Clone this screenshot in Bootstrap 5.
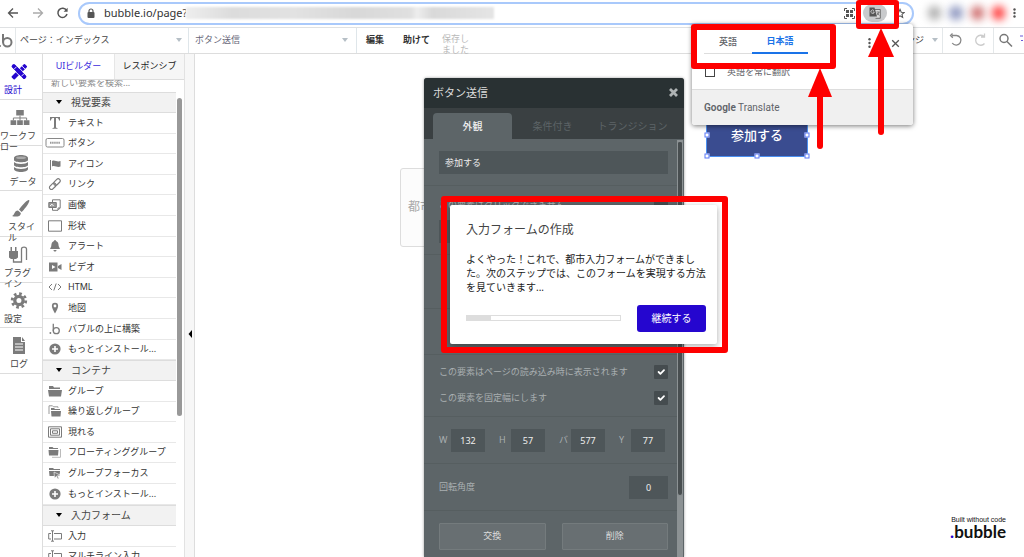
<!DOCTYPE html>
<html lang="ja">
<head>
<meta charset="utf-8">
<meta name="viewport" content="width=device-width, initial-scale=1">
<title>Bubble エディタ</title>
<link href="https://cdn.jsdelivr.net/npm/bootstrap@5.3.0/dist/css/bootstrap.min.css" rel="stylesheet">
<style>
:root{--ui:"Noto Sans","Noto Sans CJK JP",sans-serif;--blue:#2506cf;--ink:#444;--red:#fe0000}
body{font-family:var(--ui);font-size:9px;line-height:12px;color:var(--ink);background:#fff}
button,input{font-family:var(--ui)}
a{color:inherit;text-decoration:none}
svg{display:block;flex:none}
.bare{background:none;border:0;padding:0;color:inherit;font-size:inherit;line-height:inherit}
/* browser bar */
.browser{height:28px;padding:0 8px 0 6px;border-bottom:1px solid #dfe1e3;color:#5f6368;position:relative}
.omnibox{height:23px;border:2px solid #a9c9fb;border-radius:12px;padding:0 7px 0 6px;background:#fff}
.url{width:82px;border:0;padding:0;font-size:11px;line-height:16px;color:#333;background:none;outline:0}
.redacted{width:308px;height:12px;background:linear-gradient(90deg,#eee,#dcdcdc 15%,#e2e2e2 35%,#d8d8d8 55%,#e0e0e0 73%,#eee 75%,#d9d9d9 80%,#e5e5e5);filter:blur(1px)}
.extensions{width:102px;padding-left:14px}
.extensions i{width:14px;height:14px;border-radius:50%;filter:blur(4px)}
.pilled{width:24px;height:18px;border-radius:9px;background:#c8cacc}
/* editor header */
.appbar{height:26px;border-bottom:1px solid #ddd}
.appbar>*{height:25px}
.logo{width:16px;border-right:1px solid #e4e8ea}
.pick{border-right:1px solid #dfe6ea}
.pick-page{width:173px;padding:0 6px 0 4px}
.pick-element{width:168px;padding:0 8px 0 6px;color:#667}
.menus{gap:19px;padding-left:9px;color:#333}
.menus button{font-weight:600}
.caret{width:0;height:0;border:3px solid transparent;border-top:4px solid #b6bfc6;border-bottom:0}
.saved{width:30px;line-height:11px;color:#b9b9b9;padding-top:5px;margin-left:12px}
.cell{border-left:1px solid #e4e8ea;padding:0 5px}
.cell-last{padding-right:0;width:31px}
/* left rail */
.rail{width:43px;border-right:1px solid #ddd}
.rail a{height:46px;border-bottom:1px solid #ddd;line-height:11px;padding-top:9px;gap:4px}
.rail a:nth-child(3n+3){height:45px}
.rail svg{fill:#7b7b7b;height:17px}
.rail .active{color:var(--blue)}
.rail .active svg{fill:var(--blue)}
/* palette */
.palette{width:141px;background:#fff}
.ptabs{height:26px;border-bottom:1px solid #ddd}
.ptabs button{width:71px}
.ptabs .active{color:#3d2bdc}
.ptabs button+button{background:#f6f6f6;border-left:1px solid #e6e6e6;flex:1;color:#222}
.search{height:12px;overflow:hidden}
.search input{font-size:9px;line-height:12px;height:12px;margin-top:-3px;border:0;padding:0 8px;width:100%;display:block;outline:0}
.search input::placeholder{color:#888;opacity:1}
.scroller{padding-right:8px;overflow:hidden}
.thumb{right:2px;top:44px;width:5px;height:318px;border-radius:3px;background:#999}
.sect{height:21px;background:#f2f2f2;border-bottom:1px solid #ddd;border-top:1px solid #ddd;font-size:10px;padding-left:13px;gap:9px}
.sect i{border-top-color:#000}
.tools li{height:21px;border-bottom:1px solid #e8e8e8;padding-left:5px;gap:6px;color:#333;white-space:nowrap}
.tools li:nth-child(5n+2),.tools li:nth-child(5n+4){height:20px}
.tools svg{fill:#7b7b7b;stroke:none;width:14px;height:12px}
.tools .ln{fill:none;stroke:#7b7b7b}
.gutter{width:11px;background:#f7f7f7;border-left:1px solid #e2e2e2;border-right:1px solid #ddd;margin-right:-1px;z-index:1}
.gutter button{margin-top:275px;margin-left:1px}
/* canvas */
.canvas{background:#fff;overflow:hidden}
.cityfield{left:206px;top:114px;width:100px;height:79px;border:1px solid #ddd;border-radius:3px;background:#fcfcfc;font-size:12px;color:#aaa;padding:0 7px}
.joinbtn{right:216px;top:60px;width:102px;height:43px;background:#3a4c90;border:1px solid #4a8ff0;color:#fff;font-size:13px;line-height:16px;font-weight:500}
.joinbtn i{width:5px;height:5px;background:#fff;border:1px solid #5b78f5}
.made{right:18px;bottom:17px;color:#111;font:7px/9px "Liberation Sans",sans-serif}
.made strong{display:block;font:700 17px/16px Lato,sans-serif;color:#111}
.made strong span{color:var(--blue)}
/* property editor */
.inspector{left:230px;top:24px;bottom:0;width:260px;border-radius:3px 3px 0 0;background:#5d6568;color:#ddd;box-shadow:0 0 3px #0006;overflow:hidden}
.ititle{height:30px;background:#293133;padding:0 5px 0 9px;font-size:11px}
.itabs{height:31px;background:#3a4042;padding:5px 4px 0 9px;font-size:10px;color:#5d6467}
.itabs .active{width:79px;background:#5d6568;color:#eee;border-radius:4px 4px 0 0;font-weight:500}
.ibody{padding-right:7px}
.track{right:1px;top:62px;bottom:0;width:6px;background:#8c9294}
.track i{display:block;height:356px;background:#484e50;border:1px solid #8c9294;border-top-width:2px;border-radius:3px}
.block{border-bottom:1px solid #565e60;padding:12px 9px 11px 15px;color:#a9afb1}
.inspector .form-control{background:#4e5659;border:0;border-radius:0;color:#eee;font-size:9px;line-height:12px;height:23px;min-height:0;padding:0 6px}
.inspector .num{width:34px;padding:0;text-align:center}
.inspector .wide{width:39px}
.inspector .form-check-input{width:14px;height:14px;margin:0;border:0;border-radius:1px;background-color:#454c4f;background-size:12px;float:none}
.checks{height:14px}
.options{display:grid;gap:12px;padding-top:10px}
.blank-lg{height:54px}
.blank-sm{height:46px}
.quad{display:grid;grid-template-columns:repeat(4,60px)}
.quad label{width:12px}
.ibtn{height:27px;flex:1;background:#686f72;border:1px solid #747b7d;color:#ddd;border-radius:1px}
/* tutorial window */
.lesson{left:256px;top:151px;width:267px;padding:17px 11px 12px 16px;background:#fff;border-radius:2px;box-shadow:0 2px 6px #0005;color:#333;font-size:10px;line-height:14px}
.lesson h1{font-size:12px;line-height:16px;font-weight:400;color:#444;margin:0 0 14px}
.lesson p{margin:0 0 11px;color:#222}
.lesson .progress{width:155px;height:6px;border:1px solid #ddd;border-radius:0;background:#fff}
.lesson .progress-bar{background:#ddd}
.lesson .btn{width:69px;height:27px;background:var(--blue);color:#fff;font-size:10px;line-height:14px;padding:0;border:0;border-radius:3px}
/* translate popup */
.translate{right:111px;top:24px;width:221px;background:#fff;border-radius:3px;box-shadow:0 1px 5px #0008;color:#5f6368;z-index:5}
.ttabs{height:30px;padding:0 13px 0 12px}
.ttabs>button{width:48px;border-bottom:1px solid #ddd;padding-top:6px;font-weight:500}
.ttabs>.active{width:56px;color:#1a73e8;border-bottom:2px solid #1a73e8;font-weight:700}
.always{height:35px;padding:0 13px;gap:12px}
.always .form-check-input{width:10px;height:10px;margin:0;border:1px solid #444;border-radius:0}
.tfoot-bar{height:36px;background:#f0f0f0;border-top:1px solid #ddd;padding:0 12px;font:10px/12px Roboto,sans-serif;border-radius:0 0 3px 3px}
/* annotations */
.frame{border:6px solid var(--red);border-radius:3px;z-index:6;pointer-events:none}
.frame-lesson{left:247px;top:142px;width:287px;height:157px}
.frame-tabs{right:188px;top:24px;width:145px;height:45px}
.frame-icon{right:125px;top:0;width:43px;height:29px;border-width:5px}
.arrow{z-index:7;fill:var(--red);stroke:var(--red);pointer-events:none}
.arrow-tabs{right:191px;top:67px}
.arrow-icon{right:130px;top:28px}
</style>
</head>
<body class="d-flex flex-column vh-100 overflow-hidden position-relative">

<svg width="0" height="0" class="position-absolute" aria-hidden="true">
  <symbol id="plus" viewBox="0 0 14 12"><circle cx="7" cy="6" r="5.6"/><path d="M7 3v6M4 6h6" stroke="#fff" stroke-width="1.6"/></symbol>
  <symbol id="bee" viewBox="0 0 14 14"><circle cx="1.6" cy="11.6" r="1.1"/><path d="M5 1v8.500" stroke="#7b7b7b" stroke-width="1.5" fill="none"/><circle cx="8.500" cy="9" r="3.500" fill="none" stroke="#7b7b7b" stroke-width="1.5"/></symbol>
  <symbol id="field" viewBox="0 0 14 12"><path d="M4.500 1v10M3 .8h3M3 11.200h3M3 3.500H.7v5.500H3M6 3.500h7.500v5.500H6" fill="none" stroke="#7b7b7b"/></symbol>
</svg>

<header class="browser d-flex align-items-center">
  <div class="d-flex align-items-center gap-2 me-2">
    <button class="bare" aria-label="戻る"><svg width="15" height="14" viewBox="0 0 15 14" fill="none" stroke="#555" stroke-width="1.300"><path d="M12 7H3M7 2.500L2.500 7 7 11.500"/></svg></button>
    <button class="bare" aria-label="進む"><svg width="18" height="14" viewBox="0 0 18 14" fill="none" stroke="#aaa" stroke-width="1.300"><path d="M4 7h9M9 2.500L13.500 7 9 11.500"/></svg></button>
    <button class="bare" aria-label="再読み込み"><svg width="15" height="14" viewBox="0 0 15 14" fill="none" stroke="#555" stroke-width="1.500"><path d="M11.500 4.500A4.600 4.600 0 1 0 12 8"/><path d="M12.600 1.800v4h-4z" fill="#555" stroke="none"/></svg></button>
  </div>
  <div class="omnibox d-flex align-items-center flex-grow-1">
    <svg class="me-2" width="10" height="11" viewBox="0 0 10 11" fill="#555"><rect x="1.500" y="4" width="7" height="6" rx="1"/><path d="M3 4V3a2 2 0 0 1 4 0v1" fill="none" stroke="#555" stroke-width="1.200"/></svg>
    <input class="url" type="text" value="bubble.io/page?" aria-label="アドレス">
    <div class="redacted"></div>
    <div class="ms-auto d-flex align-items-center gap-2">
      <button class="bare" aria-label="QR"><svg width="11" height="11" viewBox="0 0 11 11" fill="#555"><path d="M.5 3V.5H3M8 .5h2.500V3M.5 8v2.500H3M8 10.500h2.500V8" fill="none" stroke="#555"/><path d="M2 2h3v3H2zM6 2h3v3H6zM2 6h3v3H2zM6 6h3v3H6z"/></svg></button>
      <button class="bare pilled d-flex align-items-center justify-content-center" aria-label="翻訳"><svg width="12" height="12" viewBox="0 0 12 12"><path d="M5.500 2.500h5.800v8.800H6.500" fill="#ddd" stroke="#555" stroke-width=".8"/><path d="M.5.5h5l2.500 9H.5z" fill="#555"/><path d="M5 3.700A1.700 1.700 0 1 0 5.300 5H3.800" fill="none" stroke="#eee" stroke-width=".7"/><path d="M7.500 5h3M10 5c-.4 1.500-1.200 2.500-2 3M8.200 6l2 2.500" fill="none" stroke="#555" stroke-width=".7"/></svg></button>
      <button class="bare" aria-label="ブックマーク"><svg width="10" height="11" viewBox="0 0 12 12" fill="none" stroke="#555" stroke-width="1.300"><path d="M6 1l1.500 3.400 3.600.3-2.700 2.400.8 3.600L6 8.800l-3.200 1.900.8-3.600L.9 4.700l3.600-.3z"/></svg></button>
    </div>
  </div>
  <div class="extensions d-flex align-items-center gap-2">
    <i style="background:#aaa"></i><i style="background:#8a93bd"></i><i style="background:#c66"></i><i style="background:#f33"></i>
    <svg width="3" height="10" viewBox="0 0 3 10" fill="#555"><circle cx="1.500" cy="1.500" r="1.200"/><circle cx="1.500" cy="5" r="1.200"/><circle cx="1.500" cy="8.500" r="1.200"/></svg>
  </div>
</header>

<nav class="appbar d-flex align-items-center flex-shrink-0">
  <a href="#" class="logo d-flex align-items-center" aria-label="bubble"><svg width="13" height="15" viewBox="0 0 13 15" fill="none" stroke="#777" stroke-width="2"><path d="M3 1v8.500"/><circle cx="7.300" cy="9.300" r="4.200"/><circle cx="0" cy="13" r="1" fill="#777" stroke="none"/></svg></a>
  <button class="bare pick pick-page d-flex align-items-center justify-content-between"><span>ページ：インデックス</span><i class="caret"></i></button>
  <button class="bare pick pick-element d-flex align-items-center justify-content-between"><span>ボタン送信</span><i class="caret"></i></button>
  <div class="menus d-flex"><button class="bare">編集</button><button class="bare">助けて</button></div>
  <div class="saved text-nowrap">保存し<br>ました</div>
  <div class="ms-auto d-flex">
    <button class="bare d-flex align-items-center gap-1 pe-1">アレンジ<i class="caret ms-1"></i></button>
    <div class="cell d-flex align-items-center gap-2">
      <button class="bare" aria-label="元に戻す"><svg width="16" height="14" viewBox="0 0 16 14" fill="none" stroke="#888" stroke-width="1.300"><path d="M4 2.500h4.500a4.800 4.800 0 1 1-4.300 7.500M4.500.5L2.500 2.500l2.300 2.300"/></svg></button>
      <button class="bare" aria-label="やり直し"><svg width="16" height="14" viewBox="0 0 16 14" fill="none" stroke="#ccc" stroke-width="1.300"><path d="M12 3.500A5 5 0 1 0 12.500 10.500M12.500.5V4H9"/></svg></button>
    </div>
    <button class="bare cell cell-last" aria-label="検索"><svg width="24" height="14" viewBox="0 0 24 14" fill="none" stroke="#777" stroke-width="1.500"><circle cx="5" cy="5.500" r="4"/><path d="M8 8.500l5 5"/><path d="M21 3h3M22 7.500h2" stroke="#6957d8" stroke-width="1"/></svg></button>
  </div>
</nav>

<div class="d-flex flex-grow-1 overflow-hidden">
  <nav class="rail flex-shrink-0">
    <a href="#" class="active d-flex flex-column ps-1"><svg class="ms-1" width="22" height="20" viewBox="0 0 22 20"><g transform="rotate(45 11 10)"><rect x="9" y="-1" width="5" height="22" rx="1"/><path d="M9 3h5" stroke="#fff"/></g><g transform="rotate(-45 11 10)"><rect x="8.500" y="-1" width="5" height="22" rx="2"/><path d="M7.900 0v20M14.100 0v20M9 4h4M9 16h4" stroke="#fff"/></g></svg><span>設計</span></a>
    <a href="#" class="d-flex flex-column"><svg class="ms-2" width="24" height="18" viewBox="0 0 24 18"><path d="M8 1h8v6H8zM2 12h6v5H2zM9 12h6v5H9zM16 12h6v5h-6z"/><path d="M12 7v5M5 12V9.500h14V12" fill="none" stroke="#7b7b7b"/></svg><span>ワークフ<br>ロー</span></a>
    <a href="#" class="d-flex flex-column align-items-center"><svg width="14" height="17" viewBox="0 0 14 17"><path d="M0 3c0-4 14-4 14 0v2c0 3-14 3-14 0zM0 7c2 2.500 12 2.500 14 0v3c0 3-14 3-14 0zM0 12c2 2.500 12 2.500 14 0v2c0 4-14 4-14 0z"/><ellipse cx="7" cy="2.800" rx="5" ry="1.300" fill="#aaa"/></svg><span class="ps-1">データ</span></a>
    <a href="#" class="d-flex flex-column ps-2"><svg class="ms-1" width="18" height="17" viewBox="0 0 18 17"><path d="M17 0c2 1-5 10-7.500 12L7 9.500C9 7 15-.5 17 0zM6 10.500L8.800 13C9 17 3 17 0 16c3-1 2-5.500 6-5.500z"/></svg><span>スタイ<br>ル</span></a>
    <a href="#" class="d-flex flex-column ps-1"><svg class="ms-1" width="20" height="17" viewBox="0 0 20 17"><path d="M1 5h9v6.500l-2 1.500H3l-2-1.500zM2.500 1H4v4H2.500zM7 1h1.500v4H7z"/><path d="M5.500 12v4h8V3c0-2.500 5-2.500 5 0v11" fill="none" stroke="#7b7b7b" stroke-width="1.300"/></svg><span>プラグ<br>イン</span></a>
    <a href="#" class="d-flex flex-column ps-1"><svg class="ms-1" width="20" height="18" viewBox="0 0 20 18"><circle cx="11" cy="9" r="4.400" fill="none" stroke="#7b7b7b" stroke-width="3.500"/><circle cx="11" cy="9" r="7.200" fill="none" stroke="#7b7b7b" stroke-width="3" stroke-dasharray="2.800 2.855"/></svg><span>設定</span></a>
    <a href="#" class="d-flex flex-column align-items-center pe-1"><svg width="14" height="17" viewBox="0 0 14 17"><path d="M1 0h8v5h4v12H1zM10 0l3 4h-3z"/><path d="M3 7h8M3 10h8M3 13h8" stroke="#fff"/></svg><span>ログ</span></a>
  </nav>

  <aside class="palette flex-shrink-0 position-relative overflow-hidden">
    <div class="ptabs d-flex"><button class="bare active">UIビルダー</button><button class="bare">レスポンシブ</button></div>
    <div class="search"><input type="text" placeholder="新しい要素を検索..." aria-label="新しい要素を検索"></div>
    <div class="scroller">
      <div class="sect d-flex align-items-center"><i class="caret"></i>視覚要素</div>
      <ul class="tools list-unstyled mb-0">
        <li class="d-flex align-items-center"><svg viewBox="0 0 14 12"><path d="M2 0h10v3.500h-1C10.800 1.500 10 1 8 1v9c0 .8.500 1 1.500 1v.8h-5V11C5.500 11 6 10.800 6 10V1C4 1 3.200 1.500 3 3.500H2z"/></svg>テキスト</li>
        <li class="d-flex align-items-center"><svg viewBox="0 0 14 12" overflow="visible"><rect x="-2" y="1.500" width="18" height="8.500" rx="1.500" fill="none" stroke="#888"/><path d="M2 5.800h10" stroke="#999" stroke-width="2" stroke-dasharray="1.500 .6"/></svg>ボタン</li>
        <li class="d-flex align-items-center"><svg viewBox="0 0 14 12"><path d="M2 2h1v10H2zM4 3c3-1.500 5 1.500 8.500 0v5.500C9 10 7 7 4 8.500z"/></svg>アイコン</li>
        <li class="d-flex align-items-center"><svg viewBox="0 0 14 12"><g fill="none" stroke="#7b7b7b" stroke-width="1.200" transform="rotate(-45 7 6)"><rect x="0" y="4" width="7.500" height="4" rx="2"/><rect x="6" y="4" width="7.500" height="4" rx="2"/></g></svg>リンク</li>
        <li class="d-flex align-items-center"><svg class="ln" viewBox="0 0 14 12"><path d="M4.500 3V.8h7.700V9L10 11.300H4.500V9M10 11V9h2"/><path d="M.8 3.500h7.500v5H.8z" fill="#999"/><path d="M2 7l2-1.800L5.500 7" stroke="#fff"/></svg>画像</li>
        <li class="d-flex align-items-center"><svg class="ln" viewBox="0 0 14 12"><path d="M.5.8h13v10.400H.5z"/></svg>形状</li>
        <li class="d-flex align-items-center"><svg viewBox="0 0 14 12"><path d="M7 0c1 0 1 .8 1 1 2.500.8 2.500 3.500 2.800 5.500L12 9H2l1.200-2.500C3.500 4.500 3.500 1.800 6 1c0-.2 0-1 1-1zM5.500 10h3c0 2-3 2-3 0z"/></svg>アラート</li>
        <li class="d-flex align-items-center"><svg viewBox="0 0 14 12"><path d="M1 1.500h8.500v9H1zM10 5l3.500-2v6L10 7z"/><path d="M4 4l3.500 2L4 8z" fill="#fff"/></svg>ビデオ</li>
        <li class="d-flex align-items-center"><svg class="ln" viewBox="0 0 14 12"><path d="M4 3L1 6l3 3M10 3l3 3-3 3M8.200 2.500l-2.400 7"/></svg>HTML</li>
        <li class="d-flex align-items-center"><svg viewBox="0 0 14 12"><path d="M7 .8c4.500 0 3.800 5 0 10.700C3.200 5.800 2.500.8 7 .8z"/><circle cx="7" cy="4" r="1.400" fill="#fff"/></svg>地図</li>
        <li class="d-flex align-items-center"><svg><use href="#bee"/></svg>バブルの上に構築</li>
        <li class="d-flex align-items-center"><svg><use href="#plus"/></svg>もっとインストール...</li>
      </ul>
      <div class="sect d-flex align-items-center"><i class="caret"></i>コンテナ</div>
      <ul class="tools list-unstyled mb-0">
        <li class="d-flex align-items-center"><svg viewBox="0 0 14 12"><path d="M1 4V1h4l1 1.500h6V4zM0 5h14l-1 6.500H1z"/></svg>グループ</li>
        <li class="d-flex align-items-center"><svg viewBox="0 0 14 12"><path d="M3 5V3h3l1 1h5v1zM3 6h10l-.5 5.500h-9z"/><path d="M1 9V.8h3.500l1 1H10v1" fill="none" stroke="#999"/></svg>繰り返しグループ</li>
        <li class="d-flex align-items-center"><svg class="ln" viewBox="0 0 14 12"><path d="M.5.8h13v10.400H.5zM2.500 2.800h9v6.400h-9zM4.500 4.800h5v2.500h-5z"/></svg>現れる</li>
        <li class="d-flex align-items-center"><svg viewBox="0 0 14 12"><path d="M1 3V1h3.500l1 1H10v1zM.5 4h10L10 9.500H1z"/><path d="M4 11.300h8.500V3" fill="none" stroke="#bbb"/></svg>フローティンググループ</li>
        <li class="d-flex align-items-center"><svg viewBox="0 0 14 12"><path d="M1 3V1h4l1 1h6v1zM1 4h11l-.5 5H1.500z"/><path d="M6 5l6 3-2.500.6L11 11.500l-1.300.5-1.200-2.700L6.500 11z" stroke="#fff" stroke-width=".6"/></svg>グループフォーカス</li>
        <li class="d-flex align-items-center"><svg><use href="#plus"/></svg>もっとインストール...</li>
      </ul>
      <div class="sect d-flex align-items-center"><i class="caret"></i>入力フォーム</div>
      <ul class="tools list-unstyled mb-0">
        <li class="d-flex align-items-center"><svg><use href="#field"/></svg>入力</li>
        <li class="d-flex align-items-center"><svg><use href="#field"/></svg>マルチライン入力</li>
      </ul>
    </div>
    <div class="thumb position-absolute"></div>
  </aside>
  <div class="gutter flex-shrink-0"><button class="bare d-block" aria-label="パネルを閉じる"><svg width="7" height="10" viewBox="0 0 7 10"><path d="M6 1v8L2.500 5z"/></svg></button></div>

  <main class="canvas flex-grow-1 position-relative">
    <div class="cityfield position-absolute d-flex align-items-center">都市</div>
    <button class="joinbtn position-absolute d-flex align-items-center justify-content-center p-0">参加する
      <i class="position-absolute top-50 start-0 translate-middle"></i><i class="position-absolute top-50 start-100 translate-middle"></i>
      <i class="position-absolute top-100 start-0 translate-middle"></i><i class="position-absolute top-100 start-50 translate-middle"></i><i class="position-absolute top-100 start-100 translate-middle"></i>
    </button>

    <section class="inspector position-absolute">
      <div class="ititle d-flex align-items-center justify-content-between"><span>ボタン送信</span><button class="bare" aria-label="閉じる"><svg width="11" height="11" viewBox="0 0 11 11"><path d="M2 2l7 7M9 2l-7 7" stroke="#aeb3b4" stroke-width="2.800"/></svg></button></div>
      <div class="itabs d-flex"><button class="bare active">外観</button><button class="bare flex-fill ms-2">条件付き</button><button class="bare flex-fill">トランジション</button></div>
      <div class="ibody">
        <div class="block"><input class="form-control" type="text" value="参加する" aria-label="ラベル"></div>
        <div class="block">
          <div class="checks d-flex align-items-center justify-content-between mb-2"><label for="c0">この要素はクリックできません</label><input id="c0" class="form-check-input" type="checkbox"></div>
          <input class="form-control" type="text" aria-label="スタイル">
        </div>
        <div class="block blank-lg"></div>
        <div class="block blank-sm"></div>
        <div class="block options">
          <div class="checks d-flex align-items-center justify-content-between"><label for="c1">この要素はページの読み込み時に表示されます</label><input id="c1" class="form-check-input" type="checkbox" checked></div>
          <div class="checks d-flex align-items-center justify-content-between"><label for="c2">この要素を固定幅にします</label><input id="c2" class="form-check-input" type="checkbox" checked></div>
        </div>
        <div class="block quad pe-0">
          <div class="d-flex align-items-center"><label for="w">W</label><input id="w" class="form-control num" value="132"></div>
          <div class="d-flex align-items-center"><label for="h">H</label><input id="h" class="form-control num" value="57"></div>
          <div class="d-flex align-items-center"><label for="x">バ</label><input id="x" class="form-control num" value="577"></div>
          <div class="d-flex align-items-center"><label for="y">Y</label><input id="y" class="form-control num" value="77"></div>
        </div>
        <div class="block d-flex align-items-center justify-content-between"><label for="r">回転角度</label><input id="r" class="form-control num wide" value="0"></div>
        <div class="block d-flex gap-3"><button class="ibtn">交換</button><button class="ibtn">削除</button></div>
      </div>
      <div class="track position-absolute"><i></i></div>
    </section>

    <section class="lesson position-absolute">
      <h1>入力フォームの作成</h1>
      <p>よくやった！これで、都市入力フォームができました。次のステップでは、このフォームを実現する方法を見ていきます...</p>
      <div class="d-flex align-items-center justify-content-between"><div class="progress" role="progressbar" aria-label="進捗" aria-valuenow="16" aria-valuemin="0" aria-valuemax="100"><div class="progress-bar" style="width:16%"></div></div><button class="btn">継続する</button></div>
    </section>
    <div class="frame frame-lesson position-absolute"></div>

    <a href="#" class="made position-absolute text-end">Built without code<strong><span>.</span>bubble</strong></a>
  </main>
</div>

<section class="translate position-absolute">
  <div class="ttabs d-flex"><button class="bare">英語</button><button class="bare active">日本語</button>
    <div class="ms-auto d-flex align-items-center gap-3 pt-2"><button class="bare me-1" aria-label="オプション"><svg width="3" height="10" viewBox="0 0 3 10" fill="#555"><circle cx="1.500" cy="1.200" r="1.200"/><circle cx="1.500" cy="5" r="1.200"/><circle cx="1.500" cy="8.800" r="1.200"/></svg></button><button class="bare" aria-label="閉じる"><svg width="9" height="9" viewBox="0 0 9 9" stroke="#555" stroke-width="1.300"><path d="M1.200 1.200l6.600 6.600M7.800 1.200L1.200 7.800"/></svg></button></div>
  </div>
  <div class="always d-flex align-items-center"><input class="form-check-input" type="checkbox" id="always"><label for="always">英語を常に翻訳</label></div>
  <div class="tfoot-bar d-flex align-items-center"><span><span class="fw-semibold">Google</span> Translate</span></div>
</section>
<div class="frame frame-tabs position-absolute"></div>
<div class="frame frame-icon position-absolute"></div>
<svg class="arrow arrow-tabs position-absolute" width="26" height="84" viewBox="0 0 26 84"><path d="M13 1l12 29H1z" stroke="none"/><path d="M13 28v51" stroke-width="6" stroke-linecap="round"/></svg>
<svg class="arrow arrow-icon position-absolute" width="26" height="108" viewBox="0 0 26 108"><path d="M13 0l13 29H0z" stroke="none"/><path d="M13 28v76" stroke-width="6" stroke-linecap="round"/></svg>

<script src="https://cdn.jsdelivr.net/npm/bootstrap@5.3.0/dist/js/bootstrap.bundle.min.js"></script>
</body>
</html>
